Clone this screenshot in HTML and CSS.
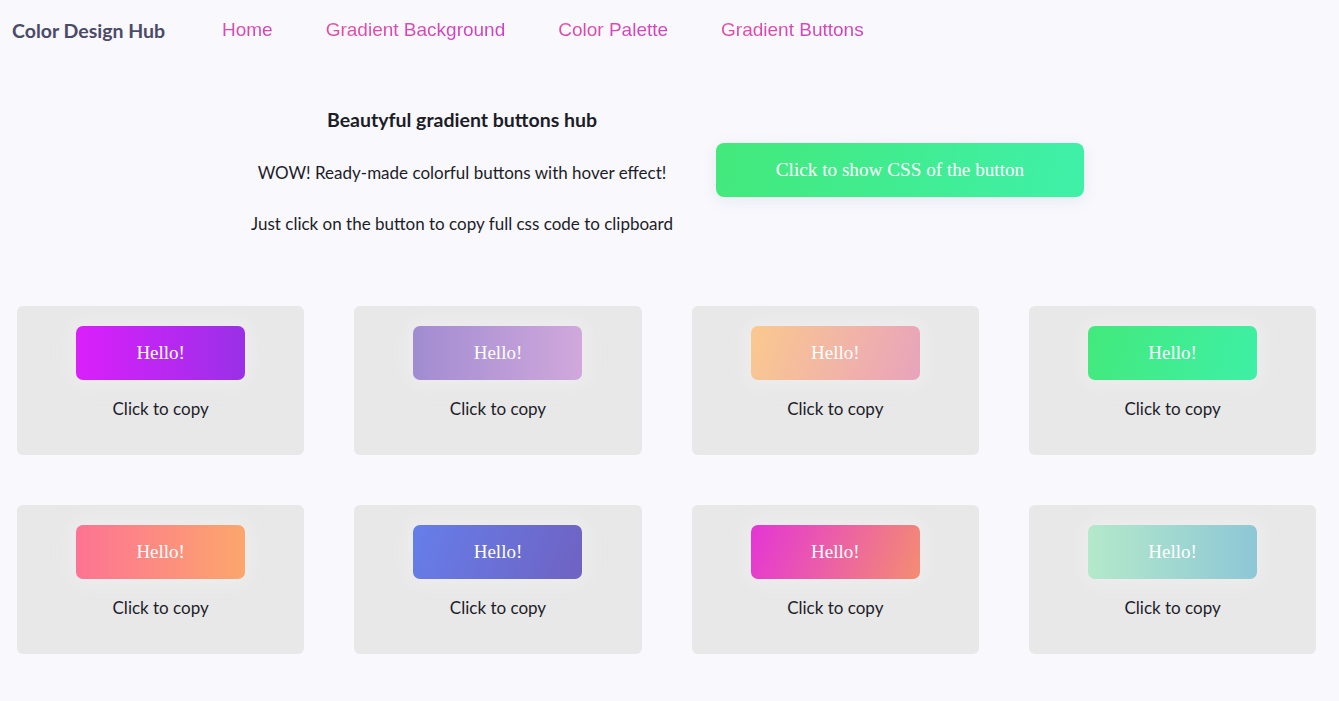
FILE: index.html
```html
<!DOCTYPE html>
<html lang="en">
<head>
<meta charset="utf-8">
<title>Color Design Hub</title>
<link rel="stylesheet" href="styles.css">
</head>
<body>
<header class="topbar">
  <a class="logo" href="#">Color Design Hub</a>
  <nav class="nav">
    <a class="nav-link" href="#">Home</a>
    <a class="nav-link" href="#">Gradient Background</a>
    <a class="nav-link" href="#">Color Palette</a>
    <a class="nav-link" href="#">Gradient Buttons</a>
  </nav>
</header>

<section class="hero">
  <div class="hero-text">
    <h1 class="hero-title">Beautyful gradient buttons hub</h1>
    <p class="hero-line">WOW! Ready-made colorful buttons with hover effect!</p>
    <p class="hero-line">Just click on the button to copy full css code to clipboard</p>
  </div>
  <button class="show-css">Click to show CSS of the button</button>
</section>

<main class="grid">
  <div class="card"><button class="btn g1">Hello!</button><p class="copy">Click to copy</p></div>
  <div class="card"><button class="btn g2">Hello!</button><p class="copy">Click to copy</p></div>
  <div class="card"><button class="btn g3">Hello!</button><p class="copy">Click to copy</p></div>
  <div class="card"><button class="btn g4">Hello!</button><p class="copy">Click to copy</p></div>
  <div class="card"><button class="btn g5">Hello!</button><p class="copy">Click to copy</p></div>
  <div class="card"><button class="btn g6">Hello!</button><p class="copy">Click to copy</p></div>
  <div class="card"><button class="btn g7">Hello!</button><p class="copy">Click to copy</p></div>
  <div class="card"><button class="btn g8">Hello!</button><p class="copy">Click to copy</p></div>
</main>
</body>
</html>
```

FILE: styles.css
```css
* { box-sizing: border-box; }

body {
  margin: 0;
  background: #f8f8fd;
  font-family: "Lato", "Open Sans", sans-serif;
  color: #222;
}

.topbar {
  display: flex;
  align-items: center;
  height: 60px;
  padding-left: 12px;
}

.logo {
  font-family: "Lato", sans-serif;
  font-weight: 700;
  font-size: 19.5px;
  color: #4b4b68;
  text-decoration: none;
  width: 210px;
}

.nav {
  display: flex;
  gap: 53px;
}

.nav-link {
  font-family: "Liberation Sans", Arial, sans-serif;
  font-size: 19px;
  text-decoration: none;
  background: linear-gradient(170deg, #ec5198 0%, #c43dcc 100%);
  -webkit-background-clip: text;
  background-clip: text;
  color: transparent;
}

.hero {
  display: flex;
  align-items: center;
  padding-left: 240px;
  margin-top: 50px;
}

.hero-text {
  width: 444px;
  text-align: center;
  margin-right: 32px;
  margin-top: -2px;
}

.hero-title {
  font-size: 19.5px;
  font-weight: 700;
  color: #1d1d28;
  margin: 0 0 31px;
  line-height: 24px;
}

.hero-line {
  font-size: 17px;
  color: #1d1d28;
  margin: 0 0 31px;
  line-height: 20px;
}

.hero-line:last-child { margin-bottom: 0; }

.show-css {
  width: 368px;
  height: 54px;
  border: none;
  border-radius: 8px;
  font-family: "Liberation Serif", "Times New Roman", serif;
  font-size: 19.2px;
  color: #fff;
  background: linear-gradient(100deg, #43e97b 0%, #3ff0a8 100%);
  box-shadow: 0 4px 15px rgba(120, 120, 170, 0.12);
  margin-top: -4px;
}

.grid {
  display: grid;
  grid-template-columns: repeat(4, 287.33px);
  column-gap: 50px;
  row-gap: 50px;
  padding-left: 17px;
  margin-top: 72px;
}

.card {
  background: #e8e8e8;
  border-radius: 6px;
  height: 149px;
  padding-top: 20px;
  display: flex;
  flex-direction: column;
  align-items: center;
}

.btn {
  width: 169px;
  height: 54px;
  border: none;
  border-radius: 7px;
  font-family: "Liberation Serif", "Times New Roman", serif;
  font-size: 19px;
  color: #fff;
  box-shadow: 0 0 18px 6px rgba(240, 240, 240, 0.7);
}

.copy {
  margin: 19px 0 0;
  font-size: 17px;
  line-height: 20px;
  color: #1d1d28;
}

.g1 { background: linear-gradient(to right, #da1ffb, #9a30e8); }
.g2 { background: linear-gradient(to right, #a18cd1, #d0a8dc); }
.g3 { background: linear-gradient(110deg, #fbc98e, #e8a3bc); }
.g4 { background: linear-gradient(110deg, #43e97b, #3ef0a6); }
.g5 { background: linear-gradient(to right, #fd7394, #fca66c); }
.g6 { background: linear-gradient(110deg, #667eea, #6f62c2); }
.g7 { background: linear-gradient(110deg, #e435d6, #f48d72); }
.g8 { background: linear-gradient(to right, #b4e9ca, #8dc7d6); }
```
